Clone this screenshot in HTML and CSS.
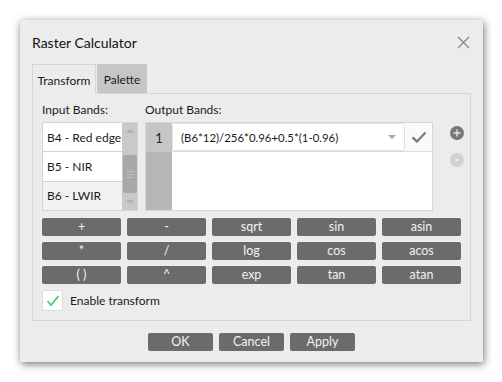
FILE: index.html
```html
<!DOCTYPE html>
<html lang="en">
<head>
<meta charset="UTF-8">
<title>Raster Calculator</title>
<link rel="stylesheet" href="styles.css">
</head>
<body>
<div class="dialog">
  <div class="dialog-header">
    <span class="dialog-title">Raster Calculator</span>
    <svg class="close-btn" width="13" height="13" viewBox="0 0 13 13">
      <path d="M1 1 L12 12 M12 1 L1 12" stroke="#8a8a8a" stroke-width="1.4" fill="none"/>
    </svg>
  </div>
  <div class="tabs">
    <div class="tab active">Transform</div>
    <div class="tab">Palette</div>
  </div>
  <div class="panel">
    <div class="bands">
      <div class="band-col">
        <div class="label">Input Bands:</div>
        <div class="input-list">
          <div class="items">
            <div class="item">B4 - Red edge</div>
            <div class="item">B5 - NIR</div>
            <div class="item selected">B6 - LWIR</div>
          </div>
          <div class="scrollbar">
            <span class="arrow up"></span>
            <div class="thumb"><span></span><span></span><span></span></div>
            <span class="arrow down"></span>
          </div>
        </div>
      </div>
      <div class="band-col">
        <div class="label">Output Bands:</div>
        <div class="output-list">
          <div class="row-nums">
            <div class="num">1</div>
          </div>
          <div class="rows">
            <div class="out-row">
              <div class="combo">
                <span>(B6*12)/256*0.96+0.5*(1-0.96)</span>
                <span class="combo-arrow"></span>
              </div>
              <div class="apply-cell">
                <svg width="16" height="12" viewBox="0 0 16 12">
                  <path d="M1.5 6.5 L6 10.5 L14.5 1.5" stroke="#808080" stroke-width="2.4" fill="none"/>
                </svg>
              </div>
            </div>
          </div>
        </div>
      </div>
      <div class="side-icons">
        <svg width="14" height="14" viewBox="0 0 14 14">
          <circle cx="7" cy="7" r="7" fill="#777"/>
          <path d="M7 3.5 V10.5 M3.5 7 H10.5" stroke="#e8e8e8" stroke-width="1.4"/>
        </svg>
        <svg width="14" height="14" viewBox="0 0 14 14">
          <circle cx="7" cy="7" r="7" fill="#d2d2d2"/>
          <path d="M5 5 L9 9 M9 5 L5 9" stroke="#ececec" stroke-width="1"/>
        </svg>
      </div>
    </div>
    <div class="ops">
      <button class="op">+</button>
      <button class="op">-</button>
      <button class="op">sqrt</button>
      <button class="op">sin</button>
      <button class="op">asin</button>
      <button class="op">*</button>
      <button class="op">/</button>
      <button class="op">log</button>
      <button class="op">cos</button>
      <button class="op">acos</button>
      <button class="op">( )</button>
      <button class="op">^</button>
      <button class="op">exp</button>
      <button class="op">tan</button>
      <button class="op">atan</button>
    </div>
    <label class="check-row">
      <span class="checkbox">
        <svg width="14" height="12" viewBox="0 0 14 12">
          <path d="M1.5 6 L5 10 L12.5 1" stroke="#3fd27a" stroke-width="1.8" fill="none"/>
        </svg>
      </span>
      Enable transform
    </label>
  </div>
  <div class="footer">
    <button class="btn">OK</button>
    <button class="btn">Cancel</button>
    <button class="btn">Apply</button>
  </div>
</div>
</body>
</html>
```

FILE: styles.css
```css
body {
  margin: 0;
  padding: 20px;
  background: #ffffff;
  font-family: Lato, 'Noto Sans', Arial, sans-serif;
  font-size: 12px;
  color: #1a1a1a;
}
.dialog {
  width: 463px;
  height: 342px;
  box-sizing: border-box;
  background: #ececec;
  box-shadow: 1px 2px 8px rgba(0,0,0,0.55);
  padding: 0 12px;
  display: flex;
  flex-direction: column;
}
.dialog-header {
  height: 44px;
  display: flex;
  align-items: center;
  justify-content: space-between;
  padding-top: 1px;
  box-sizing: border-box;
}
.dialog-title {
  font-size: 14px;
  color: #111;
}
.close-btn {
  margin-right: 1px;
}
.tabs {
  display: flex;
  height: 29px;
  position: relative;
  z-index: 1;
}
.tab {
  display: flex;
  align-items: center;
  justify-content: center;
  height: 29px;
  box-sizing: border-box;
  padding-top: 1px;
  width: 50px;
  background: #c6c6c6;
  margin-left: 1px;
}
.tab.active {
  width: 64px;
  margin-left: 0;
  background: #ececec;
  border: 1px solid #d6d6d6;
  border-bottom: none;
  height: 30px;
}
.panel {
  height: 228px;
  box-sizing: border-box;
  border: 1px solid #d6d6d6;
  width: 439px;
  padding: 7px 0 0 9px;
}
.bands {
  display: flex;
  gap: 7px;
}
.band-col .label {
  height: 21px;
  line-height: 18px;
}
.input-list {
  width: 96px;
  height: 89px;
  display: flex;
  background: #d2d2d2;
  box-sizing: border-box;
  border: 1px solid #d4d4d4;
}
.items {
  flex: 1;
  display: flex;
  flex-direction: column;
  gap: 1px;
}
.item {
  flex: 1;
  background: #fff;
  font-size: 12px;
  display: flex;
  align-items: center;
  padding-left: 4px;
  white-space: nowrap;
}
.item.selected {
  background: #f1f1f1;
}
.scrollbar {
  width: 15px;
  background: #c9c9c9;
  display: flex;
  flex-direction: column;
  align-items: center;
}
.arrow {
  width: 0;
  height: 0;
  border-left: 4px solid transparent;
  border-right: 4px solid transparent;
  margin: 6px 0;
}
.arrow.up {
  border-bottom: 4px solid #b0b0b0;
}
.arrow.down {
  border-top: 4px solid #b0b0b0;
  margin-top: auto;
}
.thumb {
  margin-top: 16px;
  width: 14px;
  height: 38px;
  background: #a8a8a8;
  border-radius: 3px;
  display: flex;
  flex-direction: column;
  align-items: center;
  justify-content: center;
  gap: 2px;
}
.thumb span {
  width: 8px;
  height: 1px;
  background: #bdbdbd;
}
.output-list {
  width: 288px;
  height: 89px;
  display: flex;
  background: #fff;
  box-sizing: border-box;
  border: 1px solid #d6d6d6;
}
.row-nums {
  width: 26px;
  background: #b6b6b6;
}
.num {
  height: 29px;
  background: #c6c6c6;
  display: flex;
  align-items: center;
  justify-content: center;
  font-size: 13px;
  color: #222;
}
.rows {
  flex: 1;
}
.out-row {
  display: flex;
  height: 29px;
  border-bottom: 1px solid #dcdcdc;
  box-sizing: border-box;
}
.combo {
  flex: 1;
  display: flex;
  align-items: center;
  justify-content: space-between;
  padding: 0 8px 0 8px;
  border: 1px solid #e2e2e2;
  border-radius: 3px;
  font-size: 11.4px;
  white-space: nowrap;
}
.combo-arrow {
  width: 0;
  height: 0;
  border-left: 4px solid transparent;
  border-right: 4px solid transparent;
  border-top: 4px solid #a6a6a6;
}
.apply-cell {
  width: 27px;
  display: flex;
  align-items: center;
  justify-content: center;
  background: #fafafa;
}
.side-icons {
  display: flex;
  flex-direction: column;
  gap: 13px;
  padding: 25px 0 0 10px;
}
.ops {
  margin-top: 7px;
  display: grid;
  grid-template-columns: repeat(5, 79px);
  grid-auto-rows: 18px;
  gap: 6px;
}
button {
  font-family: inherit;
  font-size: 12.5px;
  color: #f2f2f2;
  background: #6b6b6b;
  border: none;
  border-radius: 2px;
  padding: 0;
  height: 18px;
  line-height: 18px;
}
.check-row {
  display: flex;
  align-items: center;
  gap: 7px;
  margin-top: 6px;
}
.checkbox {
  width: 21px;
  height: 21px;
  box-sizing: border-box;
  background: #fff;
  border: 1px solid #dcdcdc;
  border-radius: 2px;
  display: flex;
  align-items: center;
  justify-content: center;
}
.footer {
  display: flex;
  justify-content: center;
  gap: 6px;
  padding-top: 12px;
}
.btn {
  width: 65px;
}
```
